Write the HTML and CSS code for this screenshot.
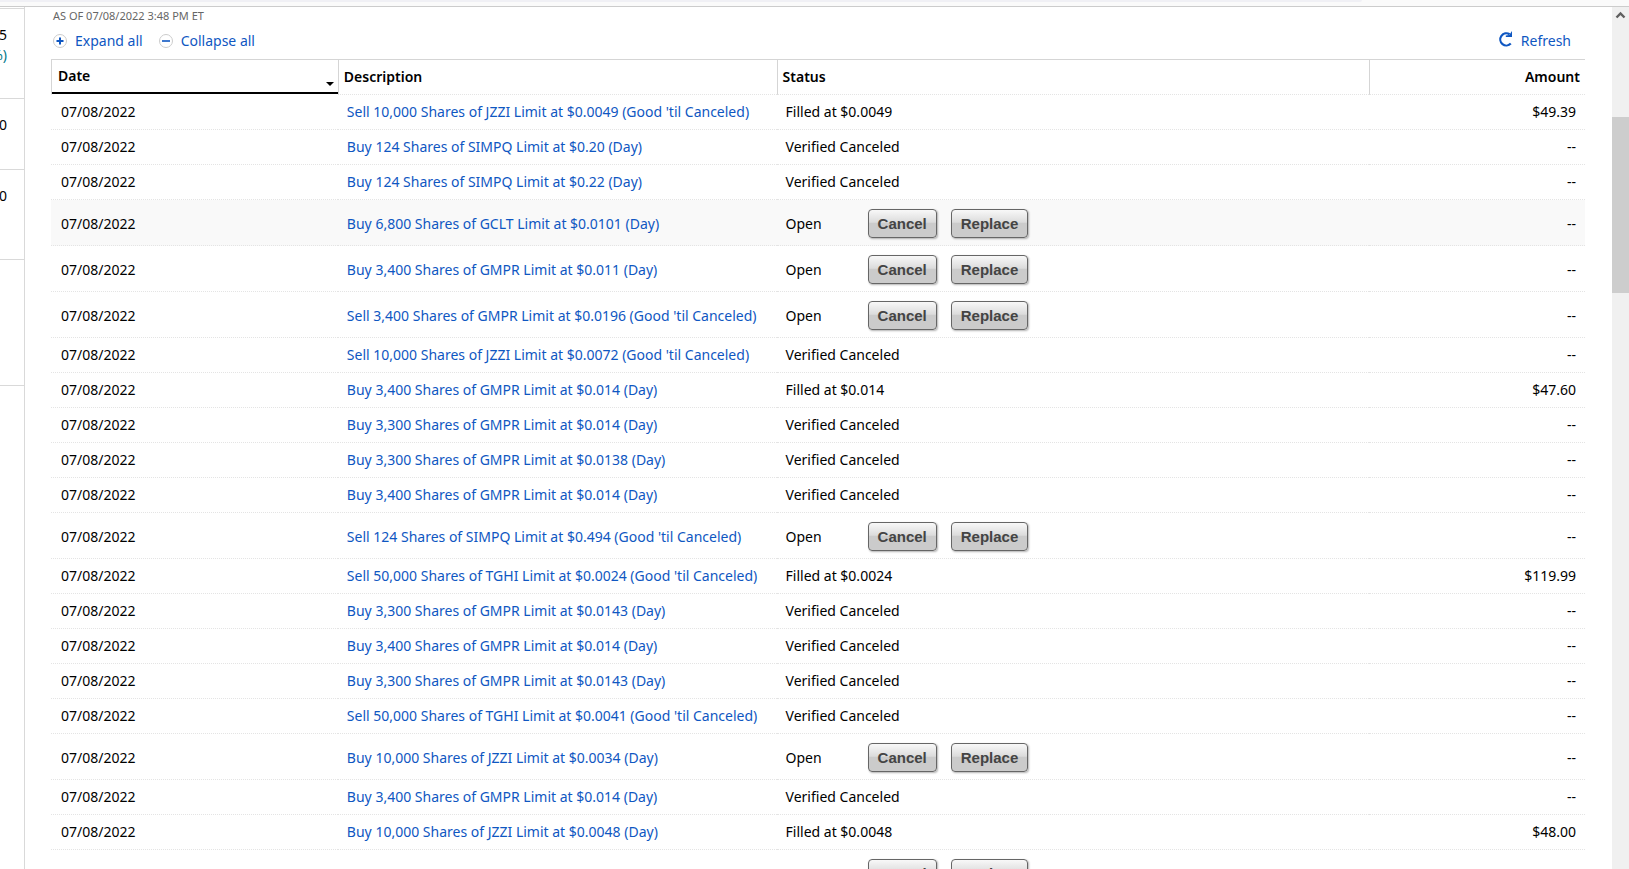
FILE: index.html
```html
<!DOCTYPE html>
<html lang="en">
<head>
  <meta charset="UTF-8">
  <meta name="viewport" content="width=device-width, initial-scale=1.0">
  <title>Orders</title>
  <link rel="stylesheet" href="styles.css">
</head>
<body>
  <div class="topbar"><div class="topbar-tab"></div></div>

  <div class="page">
    <aside class="sidebar">
      <div class="balance balance-first">
        <span>5</span>
        <span class="gain">%)</span>
      </div>
      <div class="balance balance-short"><span>0</span></div>
      <div class="balance balance-medium"><span>0</span></div>
      <div class="balance balance-tall"></div>
    </aside>

    <main class="orders">
      <p class="as-of">AS OF 07/08/2022 3:48 PM ET</p>

      <div class="toolbar">
        <a href="#" class="tool">
          <svg width="14" height="14" viewBox="0 0 14 14"><circle cx="7" cy="7" r="6.5" fill="#fff" stroke="#ccc"/><path d="M3.5 7h7M7 3.5v7" stroke="#0f57c2" stroke-width="2"/></svg>
          Expand all
        </a>
        <a href="#" class="tool">
          <svg width="14" height="14" viewBox="0 0 14 14"><circle cx="7" cy="7" r="6.5" fill="#fff" stroke="#ccc"/><path d="M3 7h8" stroke="#0f57c2" stroke-width="1.6"/></svg>
          Collapse all
        </a>
        <a href="#" class="tool refresh">
          <svg width="15" height="16" viewBox="0 0 15 16"><path d="M12.8 12.6A6.1 6.1 0 1 1 11.6 3.2" fill="none" stroke="#0f57c2" stroke-width="2.2"/><path d="M14 0v6H7.8V4.6l3.4-.6z" fill="#0f57c2"/></svg>
          Refresh
        </a>
      </div>

      <table class="order-table">
        <thead>
          <tr>
            <th class="col-date sorted"><div class="sort">Date <span class="caret"></span></div></th>
            <th class="col-desc">Description</th>
            <th class="col-status">Status</th>
            <th class="col-amount">Amount</th>
          </tr>
        </thead>
        <tbody id="orderRows"></tbody>
      </table>
    </main>

    <div class="scrollbar">
      <svg class="scroll-up" width="17" height="17" viewBox="0 0 17 17"><path d="M4.5 10.5l4-4 4 4" fill="none" stroke="#606060" stroke-width="2.4"/></svg>
      <div class="scroll-thumb"></div>
    </div>
  </div>

  <script src="script.js"></script>
</body>
</html>
```
FILE: styles.css
```css
body {
  font-family: "Noto Sans", sans-serif;
  font-size: 14px;
  line-height: 20px;
  color: #000;
  background-color: #fff;
  margin: 0;
  height: 100vh;
  display: flex;
  flex-direction: column;
  overflow: hidden;
}

a {
  color: #0f57c2;
  text-decoration: none;
}

.topbar {
  flex: none;
  height: 6px;
  background-color: #fafafa;
  border-bottom: 1px solid #ccc;
}

.topbar-tab {
  width: 83.6%;
  height: 2px;
  background-color: #f0f0f5;
  border-bottom-right-radius: 2px;
}

.page {
  flex: 1;
  display: flex;
  min-height: 0;
}

/* account balances, mostly off to the left */
.sidebar {
  flex: none;
  width: 24px;
  padding-top: 1px;
  border-right: 1px solid #d9d9d9;
  overflow: hidden;
}

.balance {
  box-sizing: border-box;
  display: flex;
  flex-direction: column;
  align-items: flex-end;
  padding: 16px 17px 0 0;
  border-bottom: 1px solid #d9d9d9;
}

.balance-first {
  height: 91px;
  border-top: 1px solid #d9d9d9;
}

.balance-short {
  height: 71px;
}

.balance-medium {
  height: 90px;
}

.balance-tall {
  height: 126px;
}

.gain {
  color: #00788a;
}

.orders {
  flex: 1;
  min-width: 0;
  padding: 0 27px 0 26px;
}

.as-of {
  margin: 0 0 0 2px;
  font-size: 11px;
  line-height: 18px;
  color: #666;
}

.toolbar {
  display: flex;
  gap: 16px;
  padding: 6px 14px 8px 2px;
}

.tool {
  display: flex;
  align-items: center;
  gap: 8px;
}

.refresh {
  margin-left: auto;
  align-items: flex-start;
}

.order-table {
  width: 100%;
  table-layout: fixed;
  border-collapse: separate;
  border-spacing: 0;
}

.order-table th {
  box-sizing: border-box;
  height: 36px;
  padding: 0 5px;
  text-align: left;
  font-weight: 600;
  border-top: 1px solid #d5d5d5;
  border-left: 1px solid #d5d5d5;
  border-bottom: 1px dotted #e4e4e4;
}

.order-table .sorted {
  padding: 0;
  border-bottom-color: #fff;
}

.sort {
  display: flex;
  justify-content: space-between;
  align-items: center;
  height: 32px;
  padding: 0 4px 0 6px;
  border-bottom: 2px solid #000;
}

.caret {
  margin-top: 16px;
  border: 4px solid transparent;
  border-top-color: #000;
  border-bottom: 0;
}

.col-date {
  width: 18.7%;
}

.col-desc {
  width: 28.6%;
}

.col-status {
  width: 38.65%;
}

.order-table .col-amount {
  text-align: right;
}

.order-table td {
  box-sizing: border-box;
  height: 35px;
  padding: 0 9px;
  white-space: nowrap;
  border-bottom: 1px dotted #e4e4e4;
}

.order-table td:first-child {
  padding-left: 10px;
}

.order-table .open td {
  height: 46px;
  padding-top: 2px;
}

.order-table .highlight td {
  background-color: #f9f9f9;
}

.status {
  display: flex;
  align-items: center;
}

.status-name {
  width: 82px;
}

.btn {
  box-sizing: border-box;
  height: 29px;
  margin-right: 14px;
  padding: 0 9px;
  font-family: "Liberation Sans", Arial, sans-serif;
  font-size: 15px;
  font-weight: bold;
  color: #444;
  background: linear-gradient(#f8f8f8, #dcdcdc 45%, #cbcbcb 50%, #cbcbcb);
  border: 1px solid #666;
  border-radius: 4px;
  box-shadow: 1px 1px 2px rgba(0, 0, 0, 0.3);
  cursor: pointer;
}

.scrollbar {
  flex: none;
  width: 17px;
  background-color: #f0f0f0;
}

.scroll-up {
  display: block;
}

.scroll-thumb {
  height: 176px;
  margin-top: 93px;
  background-color: #cdcdcd;
}
```
FILE: script.js
```js
const orders = [
  ["Sell 10,000 Shares of JZZI Limit at $0.0049 (Good 'til Canceled)", "Filled at $0.0049", "$49.39"],
  ["Buy 124 Shares of SIMPQ Limit at $0.20 (Day)", "Verified Canceled", "--"],
  ["Buy 124 Shares of SIMPQ Limit at $0.22 (Day)", "Verified Canceled", "--"],
  ["Buy 6,800 Shares of GCLT Limit at $0.0101 (Day)", "Open", "--"],
  ["Buy 3,400 Shares of GMPR Limit at $0.011 (Day)", "Open", "--"],
  ["Sell 3,400 Shares of GMPR Limit at $0.0196 (Good 'til Canceled)", "Open", "--"],
  ["Sell 10,000 Shares of JZZI Limit at $0.0072 (Good 'til Canceled)", "Verified Canceled", "--"],
  ["Buy 3,400 Shares of GMPR Limit at $0.014 (Day)", "Filled at $0.014", "$47.60"],
  ["Buy 3,300 Shares of GMPR Limit at $0.014 (Day)", "Verified Canceled", "--"],
  ["Buy 3,300 Shares of GMPR Limit at $0.0138 (Day)", "Verified Canceled", "--"],
  ["Buy 3,400 Shares of GMPR Limit at $0.014 (Day)", "Verified Canceled", "--"],
  ["Sell 124 Shares of SIMPQ Limit at $0.494 (Good 'til Canceled)", "Open", "--"],
  ["Sell 50,000 Shares of TGHI Limit at $0.0024 (Good 'til Canceled)", "Filled at $0.0024", "$119.99"],
  ["Buy 3,300 Shares of GMPR Limit at $0.0143 (Day)", "Verified Canceled", "--"],
  ["Buy 3,400 Shares of GMPR Limit at $0.014 (Day)", "Verified Canceled", "--"],
  ["Buy 3,300 Shares of GMPR Limit at $0.0143 (Day)", "Verified Canceled", "--"],
  ["Sell 50,000 Shares of TGHI Limit at $0.0041 (Good 'til Canceled)", "Verified Canceled", "--"],
  ["Buy 10,000 Shares of JZZI Limit at $0.0034 (Day)", "Open", "--"],
  ["Buy 3,400 Shares of GMPR Limit at $0.014 (Day)", "Verified Canceled", "--"],
  ["Buy 10,000 Shares of JZZI Limit at $0.0048 (Day)", "Filled at $0.0048", "$48.00"],
  ["", "", ""]
];

const highlighted = 3;
const lastRow = orders.length - 1;

document.getElementById("orderRows").innerHTML = orders.map(([desc, status, amount], i) => {
  const open = status === "Open" || i === lastRow;
  const buttons = '<button class="btn">Cancel</button><button class="btn">Replace</button>';
  return `
    <tr class="${open ? "open" : ""} ${i === highlighted ? "highlight" : ""}">
      <td>${desc ? "07/08/2022" : ""}</td>
      <td><a href="#">${desc}</a></td>
      <td><div class="status"><span class="status-name">${status}</span>${open ? buttons : ""}</div></td>
      <td class="col-amount">${amount}</td>
    </tr>`;
}).join("");
```
